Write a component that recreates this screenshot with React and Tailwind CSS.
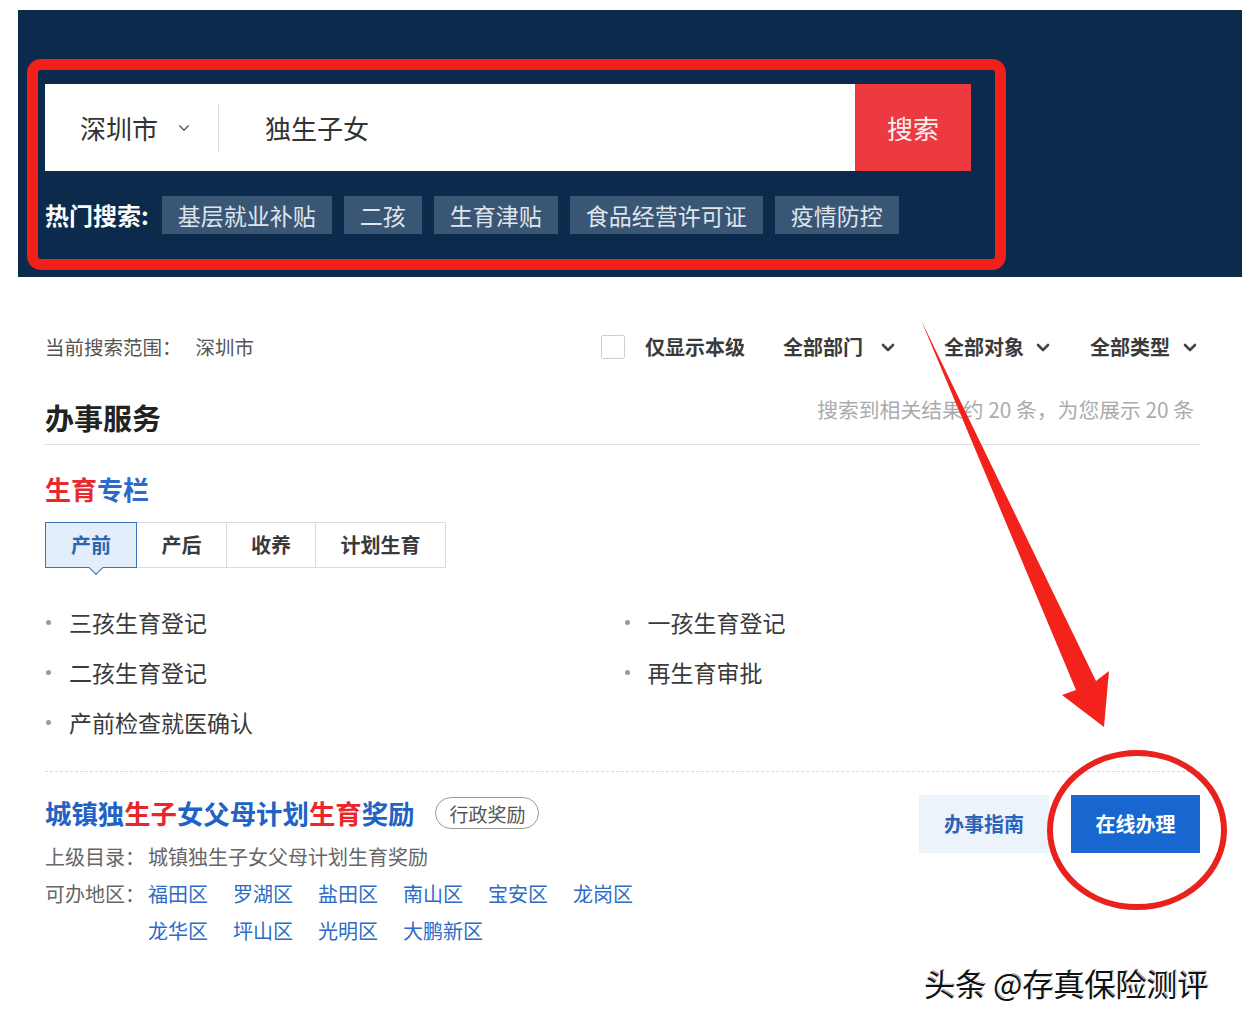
import React from "react";

function Chev({ className = "", w = 14, h = 9, sw = 2.6 }) {
  return (
    <svg width={w} height={h} viewBox="0 0 14 9" className={className} fill="none">
      <polyline points="2,2 7,7 12,2" stroke="currentColor" strokeWidth={sw} strokeLinecap="round" strokeLinejoin="round" />
    </svg>
  );
}

const hotTags = ["基层就业补贴", "二孩", "生育津贴", "食品经营许可证", "疫情防控"];
const districts1 = ["福田区", "罗湖区", "盐田区", "南山区", "宝安区", "龙岗区", "龙华区", "坪山区", "光明区", "大鹏新区"];

export default function App() {
  return (
    <div className="relative w-[1242px] h-[1026px] overflow-hidden bg-white font-['Noto_Sans_CJK_SC','Microsoft_YaHei',sans-serif] text-[#333]">
      {/* Header band */}
      <div className="pt-[10px] pl-[18px]">
        <header className="h-[267px] bg-[#0c2a4b] pl-[27px] pt-[74px]">
          <div className="flex h-[87px] w-[926px]">
            <div className="flex flex-1 items-center bg-white">
              <span className="ml-[35px] text-[26px] leading-none text-[#333]">深圳市</span>
              <Chev className="ml-[20px] text-[#555]" w={12} h={8} sw={1.6} />
              <div className="ml-[28px] h-[50px] w-px bg-[#dcdcdc]" />
              <span className="ml-[46px] text-[26px] leading-none text-[#333]">独生子女</span>
            </div>
            <div className="flex w-[116px] items-center justify-center bg-[#ec3a40] text-[26px] leading-none text-[#fdf0f0]">
              搜索
            </div>
          </div>
          <div className="mt-[25px] flex h-[38px] items-center">
            <span className="mr-[13px] text-[24px] font-bold leading-none text-white">热门搜索:</span>
            <div className="flex gap-[12px]">
              {hotTags.map((t) => (
                <span
                  key={t}
                  className="flex h-[38px] items-center bg-[#3a5675] px-[16px] text-[23px] leading-none text-[#dfe5ec]"
                >
                  {t}
                </span>
              ))}
            </div>
          </div>
        </header>
      </div>

      {/* Content */}
      <main className="ml-[45px] w-[1155px]">
        {/* Filter row */}
        <div className="mt-[55px] flex h-[30px] items-center justify-between">
          <div className="flex items-center text-[19.5px] leading-none text-[#555]">
            <span>当前搜索范围：</span>
            <span className="ml-[14px]">深圳市</span>
          </div>
          <div className="flex items-center text-[20px] font-bold leading-none text-[#3a3a3a]">
            <span className="h-[24px] w-[24px] rounded-[2px] border border-[#cfcfcf] bg-white" />
            <span className="ml-[20px]">仅显示本级</span>
            <span className="ml-[38px]">全部部门</span>
            <Chev className="ml-[18px] text-[#444]" />
            <span className="ml-[49px]">全部对象</span>
            <Chev className="ml-[12px] text-[#444]" />
            <span className="ml-[40px]">全部类型</span>
            <Chev className="ml-[13px] mr-[3px] text-[#444]" />
          </div>
        </div>

        {/* Title row */}
        <div className="mt-[35px] flex items-start justify-between border-b border-[#e2e2e2] pb-[7px]">
          <h2 className="text-[29px] font-bold leading-[40px] text-[#222]">办事服务</h2>
          <span className="mr-[6px] text-[20.8px] leading-[24px] text-[#ababab]">
            搜索到相关结果约 20 条，为您展示 20 条
          </span>
        </div>

        {/* Column */}
        <h3 className="mt-[27px] text-[26px] font-bold leading-[34px]">
          <span className="text-[#e8282c]">生育</span>
          <span className="text-[#2c6bcb]">专栏</span>
        </h3>

        <div className="mt-[16px] flex h-[46px] text-[20px] font-bold leading-none">
          <div className="relative z-10 flex w-[92px] items-center justify-center border border-[#3b71b8] bg-[#e2effb] text-[#2b64b3]">
            产前
            <span className="absolute -bottom-[6px] left-[45px] h-[10px] w-[10px] rotate-45 border-b border-r border-[#3b71b8] bg-[#e2effb]" />
          </div>
          <div className="-ml-px flex w-[91px] items-center justify-center border border-[#dcdcdc] text-[#3a3a3a]">产后</div>
          <div className="-ml-px flex w-[90px] items-center justify-center border border-[#dcdcdc] text-[#3a3a3a]">收养</div>
          <div className="-ml-px flex w-[131px] items-center justify-center border border-[#dcdcdc] text-[#3a3a3a]">计划生育</div>
        </div>

        <ul className="mt-[29px] grid grid-cols-2 text-[23px] leading-[50px] text-[#3a3a3a]">
          {["三孩生育登记", "一孩生育登记", "二孩生育登记", "再生育审批", "产前检查就医确认"].map((t, i) => (
            <li key={t} className={`flex items-center ${i % 2 === 1 ? "pl-[1px]" : ""}`}>
              <span className="ml-[1px] h-[5px] w-[5px] rounded-full bg-[#9a9a9a]" />
              <span className="ml-[18px]">{t}</span>
            </li>
          ))}
        </ul>

        <div className="mt-[24px] border-t border-dashed border-[#d9d9d9]" />

        {/* Result */}
        <div className="mt-[23px] flex justify-between">
          <div>
            <div className="flex h-[36px] items-center">
              <span className="text-[26.4px] font-bold leading-none text-[#2163c4]">
                城镇独<span className="text-[#e8262b]">生子</span>女父母计划<span className="text-[#e8262b]">生育</span>奖励
              </span>
              <span className="ml-[21px] flex h-[32px] items-center rounded-full border border-[#9a9a9a] px-[13px] text-[19px] leading-none text-[#555]">
                行政奖励
              </span>
            </div>
            <div className="mt-[8px] flex text-[20px] leading-[36px] text-[#666]">
              <span className="w-[103px]">上级目录：</span>
              <span>城镇独生子女父母计划生育奖励</span>
            </div>
            <div className="flex text-[20px] leading-[37px]">
              <span className="w-[103px] text-[#666]">可办地区：</span>
              <div className="flex w-[500px] flex-wrap gap-x-[25px] text-[#2d6bc4]">
                {districts1.map((d) => (
                  <span key={d}>{d}</span>
                ))}
              </div>
            </div>
          </div>
          <div className="flex h-[58px] gap-[22px] text-[20px] font-bold">
            <div className="flex w-[130px] items-center justify-center bg-[#edf3fa] text-[#2a63b8]">办事指南</div>
            <div className="flex w-[129px] items-center justify-center bg-[#1866d0] text-white">在线办理</div>
          </div>
        </div>
      </main>

      {/* Annotation: red rounded rectangle */}
      <div className="pointer-events-none absolute left-[27px] top-[59px] h-[211px] w-[979px] rounded-[14px] border-[11px] border-[#f1201b]" />

      {/* Annotation: arrow and circle */}
      <svg className="pointer-events-none absolute left-0 top-0" width="1242" height="1026" viewBox="0 0 1242 1026">
        <polygon
          points="921,320 1096,681 1109,671 1104,727 1062,695 1076,690"
          fill="#f3221b"
        />
        <ellipse cx="1137" cy="830" rx="87" ry="77" fill="none" stroke="#e8231d" strokeWidth="6" />
      </svg>

      {/* Watermark */}
      <div className="absolute left-[924px] top-[962px] text-[31px] leading-[42px] text-[#111] [text-shadow:1px_1px_0_#fff,-1px_-1px_0_#fff,1px_-1px_0_#888]">
        头条 @存真保险测评
      </div>
    </div>
  );
}
